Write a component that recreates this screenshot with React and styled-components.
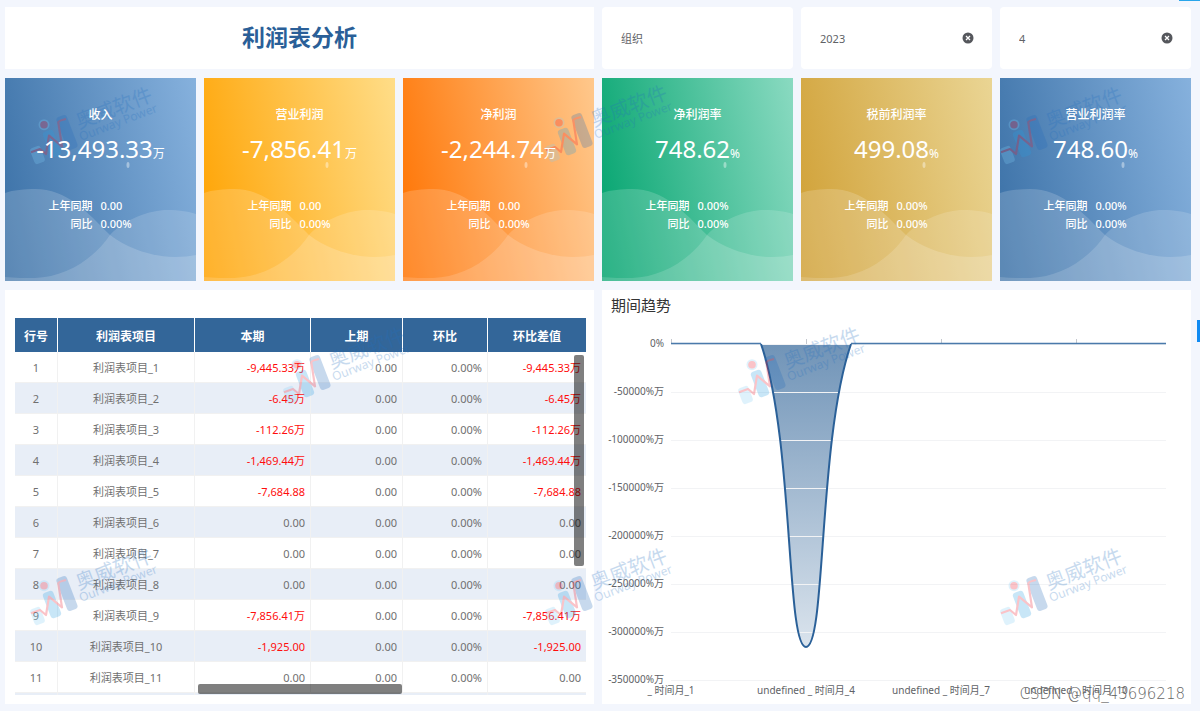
import React, { useState } from "react"
import styled, { createGlobalStyle } from "styled-components"

const CARDS = [
  { title: "收入", value: "-13,493.33", unit: "万", last: "0.00", ratio: "0.00%", from: "#3a70a6", to: "#86b1dd" },
  { title: "营业利润", value: "-7,856.41", unit: "万", last: "0.00", ratio: "0.00%", from: "#ffa200", to: "#ffdd88" },
  { title: "净利润", value: "-2,244.74", unit: "万", last: "0.00", ratio: "0.00%", from: "#ff7200", to: "#ffc88c" },
  { title: "净利润率", value: "748.62", unit: "%", last: "0.00%", ratio: "0.00%", from: "#00a36d", to: "#8adac1" },
  { title: "税前利润率", value: "499.08", unit: "%", last: "0.00%", ratio: "0.00%", from: "#d0a035", to: "#ead594" },
  { title: "营业利润率", value: "748.60", unit: "%", last: "0.00%", ratio: "0.00%", from: "#3a70a6", to: "#86b1dd" },
]

const COLUMNS = [
  { name: "行号", width: 43 },
  { name: "利润表项目", width: 137 },
  { name: "本期", width: 116 },
  { name: "上期", width: 92 },
  { name: "环比", width: 85 },
  { name: "环比差值", width: 98 },
]
const TABLE_WIDTH = COLUMNS.reduce((sum, col) => sum + col.width, 0)

const AMOUNTS = [
  "-9,445.33万",
  "-6.45万",
  "-112.26万",
  "-1,469.44万",
  "-7,684.88",
  "0.00",
  "0.00",
  "0.00",
  "-7,856.41万",
  "-1,925.00",
  "0.00",
]

const WATERMARKS = [
  [30, 87],
  [545, 85],
  [1000, 87],
  [283, 327],
  [738, 327],
  [30, 548],
  [545, 548],
  [1000, 548],
]

const Y_LABELS = ["0%", "-50000%万", "-100000%万", "-150000%万", "-200000%万", "-250000%万", "-300000%万", "-350000%万"]
const X_LABELS = ["_ 时间月_1", "undefined _ 时间月_4", "undefined _ 时间月_7", "undefined _ 时间月_10"]
const AXIS_LEFT = 69
const AXIS_RIGHT = 564
const AXIS_TOP = 24
const GRID_STEP = 48
const TICK_STEP = 135

export default function App() {
  return (
    <>
      <GlobalStyle />
      <Page>
        <TitlePanel>
          <Title>利润表分析</Title>
        </TitlePanel>
        <Filter label="组织" initial="" />
        <Filter label="年" initial="2023" />
        <Filter label="月" initial="4" />
        {CARDS.map((card) => (
          <IndexCard key={card.title} {...card} />
        ))}
        <TablePanel>
          <ProfitTable />
        </TablePanel>
        <ChartPanel>
          <ChartTitle>期间趋势</ChartTitle>
          <TrendChart />
        </ChartPanel>
        {WATERMARKS.map(([x, y]) => (
          <Watermark key={`${x}-${y}`} x={x} y={y} />
        ))}
        <Signature>CSDN @qq_43696218</Signature>
        <TopMark />
        <SideMark />
      </Page>
    </>
  )
}

function Filter({ label, initial }) {
  const [value, setValue] = useState(initial)

  return (
    <FilterBox>
      <FilterInput
        type="text"
        aria-label={label}
        placeholder={label}
        value={value}
        onChange={(e) => setValue(e.target.value)}
      />
      {value && (
        <ClearButton type="button" aria-label="清除" onClick={() => setValue("")}>
          <svg width="12" height="12" viewBox="0 0 12 12">
            <circle cx="6" cy="6" r="5.5" fill="#55575c" />
            <path d="M4 4 L8 8 M8 4 L4 8" stroke="#fff" strokeWidth="1.3" />
          </svg>
        </ClearButton>
      )}
    </FilterBox>
  )
}

function IndexCard({ title, value, unit, last, ratio, from, to }) {
  return (
    <Card $from={from} $to={to}>
      <CardArt viewBox="0 0 191 203" preserveAspectRatio="none">
        <path
          d="M0 115 C8 112 20 111 30 111 C62 111 82 134 105 157 C125 172 150 179 170 179 C178 179 185 178 191 177 V203 H0 Z"
          fill="#fff"
          opacity="0.17"
        />
        <path
          d="M0 199 C10 200 20 200 30 200 C60 199 88 182 105 157 C120 141 145 132 162 132 C175 132 185 134 191 136 V203 H0 Z"
          fill="#fff"
          opacity="0.15"
        />
        <ellipse cx="123" cy="87" rx="1.5" ry="3" fill="#fff" opacity="0.4" />
      </CardArt>
      <CardBody>
        <CardTitle>{title}</CardTitle>
        <CardValue>
          {value}
          <CardUnit>{unit}</CardUnit>
        </CardValue>
        <CardDetails>
          <dt>上年同期</dt>
          <dd>{last}</dd>
          <dt>同比</dt>
          <dd>{ratio}</dd>
        </CardDetails>
      </CardBody>
    </Card>
  )
}

function ProfitTable() {
  return (
    <TableFrame>
      <Table>
        <colgroup>
          {COLUMNS.map((col) => (
            <col key={col.name} style={{ width: `${(col.width / TABLE_WIDTH) * 100}%` }} />
          ))}
        </colgroup>
        <thead>
          <tr>
            {COLUMNS.map((col) => (
              <HeadCell key={col.name}>{col.name}</HeadCell>
            ))}
          </tr>
        </thead>
        <tbody>
          {AMOUNTS.map((amount, i) => {
            const negative = amount.startsWith("-")
            return (
              <Row key={i}>
                <Cell $align="center">{i + 1}</Cell>
                <Cell $align="center">利润表项目_{i + 1}</Cell>
                <Cell $negative={negative}>{amount}</Cell>
                <Cell>0.00</Cell>
                <Cell>0.00%</Cell>
                <Cell $negative={negative}>{amount}</Cell>
              </Row>
            )
          })}
          <Row>
            {COLUMNS.map((col) => (
              <Cell key={col.name} />
            ))}
          </Row>
        </tbody>
      </Table>
      <VerticalBar />
      <HorizontalBar />
    </TableFrame>
  )
}

function TrendChart() {
  const line = "M159 24 C192 120 184 327 204 327 C224 327 216 120 249 24"

  return (
    <Chart viewBox="0 0 589 384" role="img" aria-label="期间趋势">
      <defs>
        <linearGradient id="area" x1="0" y1="0" x2="0" y2="1">
          <stop offset="0" stopColor="#336699" stopOpacity="0.7" />
          <stop offset="1" stopColor="#336699" stopOpacity="0.18" />
        </linearGradient>
      </defs>
      <path d={`${line} Z`} fill="url(#area)" />
      {Y_LABELS.map((label, i) => (
        <g key={label}>
          <path
            d={`M${AXIS_LEFT} ${AXIS_TOP + i * GRID_STEP + 0.5} H${AXIS_RIGHT}`}
            stroke="#f2f3f5"
          />
          <AxisText x="62" y={AXIS_TOP + i * GRID_STEP + 3} textAnchor="end">
            {label}
          </AxisText>
        </g>
      ))}
      {X_LABELS.map((label, i) => (
        <g key={label}>
          <path d={`M${AXIS_LEFT + i * TICK_STEP + 0.5} 19 V24`} stroke="#c4c8ce" />
          <AxisText x={AXIS_LEFT + i * TICK_STEP} y="374" textAnchor="middle">
            {label}
          </AxisText>
        </g>
      ))}
      <path d={`M${AXIS_LEFT} 23.5 H159 M249 23.5 H${AXIS_RIGHT}`} stroke="#4a7aab" strokeWidth="1.5" />
      <path d={line} fill="none" stroke="#2a6098" strokeWidth="2" />
    </Chart>
  )
}

function Watermark({ x, y }) {
  return (
    <Mark style={{ left: x, top: y }} width="130" height="80" viewBox="0 0 130 80" aria-hidden="true">
      <rect x="2" y="59.5" width="11" height="17" rx="3" transform="rotate(-21 7.5 68)" fill="#83cff7" />
      <circle cx="14" cy="37.7" r="5.5" fill="#83cff7" />
      <circle cx="14" cy="37.7" r="3.8" fill="#ef1327" />
      <rect x="16.5" y="43" width="11" height="27" rx="3" transform="rotate(-21 22 56.5)" fill="#279fe3" />
      <rect x="31.5" y="28" width="11" height="35" rx="3" transform="rotate(-21 37 45.5)" fill="#236bbb" />
      <path
        d="M1 65.3 L10 62 L16 67 L19 48.7 L32 59.3 L28.3 35.3 Q28.6 33.6 36 32"
        fill="none"
        stroke="#ef1327"
        strokeWidth="2.2"
        strokeLinejoin="round"
      />
      <text x="49" y="42" fontSize="20" fill="#236fbf" transform="rotate(-21 49 42)">
        奥威软件
      </text>
      <text x="51" y="54" fontSize="12" fill="#236fbf" transform="rotate(-21 51 54)">
        Ourway Power
      </text>
    </Mark>
  )
}

const GlobalStyle = createGlobalStyle`
  * {
    box-sizing: border-box;
  }

  body {
    margin: 0;
    background: #f3f6fd;
    font-family: "Noto Sans", "Noto Sans CJK SC", sans-serif;
  }
`

const Page = styled.main`
  position: relative;
  display: grid;
  grid-template-columns: repeat(6, minmax(0, 1fr));
  grid-template-rows: 62px 203px 1fr;
  gap: 9px 8px;
  min-height: 100vh;
  padding: 7px 9px 7px 5px;
  overflow: hidden;
`

const TitlePanel = styled.header`
  grid-column: span 3;
  display: flex;
  align-items: center;
  justify-content: center;
  padding-bottom: 2px;
  background: #fff;
`

const Title = styled.h1`
  margin: 0;
  font-size: 23px;
  line-height: 32px;
  font-weight: 700;
  color: #2a5f98;
`

const FilterBox = styled.div`
  display: flex;
  align-items: center;
  padding: 0 18px 0 19px;
  background: #fff;
  border-radius: 4px;
`

const FilterInput = styled.input`
  flex: 1;
  min-width: 0;
  height: 24px;
  padding: 0;
  border: 0;
  outline: 0;
  background: none;
  font-family: inherit;
  font-size: 11px;
  color: #606266;

  &::placeholder {
    color: #606266;
    opacity: 1;
  }
`

const ClearButton = styled.button`
  display: flex;
  padding: 0;
  border: 0;
  background: none;
  cursor: pointer;
`

const Card = styled.section`
  position: relative;
  background: linear-gradient(78deg, ${(props) => props.$from}, ${(props) => props.$to});
`

const CardArt = styled.svg`
  position: absolute;
  inset: 0;
  width: 100%;
  height: 100%;
`

const CardBody = styled.div`
  position: relative;
  z-index: 2;
  padding-top: 28px;
  color: #fff;
  text-align: center;
`

const CardTitle = styled.h2`
  margin: 0;
  font-size: 12px;
  line-height: 18px;
  font-weight: 500;
`

const CardValue = styled.div`
  height: 36px;
  margin-top: 7px;
  font-size: 24px;
  line-height: 36px;
`

const CardUnit = styled.span`
  font-size: 12px;
`

const CardDetails = styled.dl`
  display: grid;
  grid-template-columns: 1fr 1fr;
  column-gap: 8px;
  margin: 30px 0 0;
  padding-right: 8px;
  font-size: 11px;
  line-height: 18px;
  font-weight: 500;

  dt {
    text-align: right;
  }

  dd {
    margin: 0;
    text-align: left;
  }
`

const TablePanel = styled.section`
  grid-column: span 3;
  padding: 28px 8px 9px 10px;
  background: #fff;
`

const TableFrame = styled.div`
  position: relative;
  height: 377px;
  overflow: hidden;
`

const Table = styled.table`
  width: 100%;
  table-layout: fixed;
  border-collapse: separate;
  border-spacing: 0;
`

const HeadCell = styled.th`
  height: 34px;
  padding: 2px 0 0;
  border-right: 1px solid #fff;
  background: #336699;
  font-size: 12px;
  font-weight: 700;
  color: #fff;

  &:last-child {
    border-right: 0;
  }
`

const Row = styled.tr`
  &:nth-child(even) {
    background: #e8eef7;
  }
`

const Cell = styled.td`
  height: 31px;
  padding: 2px 5px 0;
  border-right: 1px solid #f1f1f1;
  border-bottom: 1px solid #f1f1f1;
  font-size: 11px;
  line-height: 18px;
  text-align: ${(props) => props.$align || "right"};
  color: ${(props) => (props.$negative ? "#ff0d0d" : "#707070")};

  &:last-child {
    border-right: 0;
  }
`

const ScrollBar = styled.div`
  position: absolute;
  border-radius: 2px;
  background: rgba(0, 0, 0, 0.5);
`

const VerticalBar = styled(ScrollBar)`
  top: 37px;
  right: 2px;
  width: 10px;
  height: 211px;
`

const HorizontalBar = styled(ScrollBar)`
  bottom: 1px;
  left: 32%;
  width: 204px;
  height: 10px;
`

const ChartPanel = styled.section`
  grid-column: span 3;
  background: #fff;
`

const ChartTitle = styled.h2`
  margin: 0;
  padding: 5px 9px;
  font-size: 15px;
  line-height: 20px;
  font-weight: 400;
  color: #333;
`

const Chart = styled.svg`
  display: block;
  width: 100%;
`

const AxisText = styled.text`
  font-size: 10px;
  fill: #606266;
`

const Mark = styled.svg`
  position: absolute;
  z-index: 1;
  overflow: visible;
  opacity: 0.25;
  pointer-events: none;
`

const Signature = styled.div`
  position: absolute;
  right: 15px;
  bottom: 7px;
  z-index: 3;
  font-family: "DejaVu Sans", sans-serif;
  font-size: 15px;
  font-weight: 200;
  line-height: 20px;
  color: #666;
`

const TopMark = styled.div`
  position: absolute;
  top: 0;
  right: 0;
  width: 21px;
  height: 1px;
  background: #29a5ea;
`

const SideMark = styled.div`
  position: absolute;
  top: 320px;
  right: 0;
  width: 3px;
  height: 22px;
  background: #118bf2;
`
